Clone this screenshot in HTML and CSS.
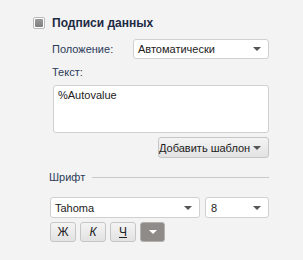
FILE: index.html
```html
<!DOCTYPE html>
<html>
<head>
<meta charset="utf-8">
<link rel="stylesheet" href="styles.css">
</head>
<body>
<div class="panel">
  <div class="header">
    <span class="checkbox"></span>
    <span class="title">Подписи данных</span>
  </div>
  <div class="body">
    <div class="row">
      <span class="label">Положение:</span>
      <div class="select pos"><span>Автоматически</span><i class="arrow"></i></div>
    </div>
    <div class="label text-label">Текст:</div>
    <div class="textarea">%Autovalue</div>
    <div class="btn-row">
      <div class="btn add">Добавить шаблон<i class="arrow"></i></div>
    </div>
  </div>
  <div class="font">
    <div class="legend"><span class="label">Шрифт</span><span class="rule"></span></div>
    <div class="font-row">
      <div class="select face"><span>Tahoma</span><i class="arrow"></i></div>
      <div class="select size"><span>8</span><i class="arrow"></i></div>
    </div>
    <div class="style-row">
      <div class="btn sq">Ж</div>
      <div class="btn sq italic">К</div>
      <div class="btn sq under">Ч</div>
      <div class="btn sq dark"><i class="arrow white"></i></div>
    </div>
  </div>
</div>
</body>
</html>
```
FILE: styles.css
```css
* { box-sizing: border-box; }
html, body { margin: 0; padding: 0; background: #f3f3f3; }
body {
  font-family: "Liberation Sans", Arial, sans-serif;
  font-size: 11px;
  color: #222;
  width: 303px;
  height: 260px;
  overflow: hidden;
}
.panel { padding: 17px 0 0 33px; width: 269px; }
.header { display: flex; align-items: center; height: 12px; gap: 7px; }
.checkbox {
  width: 12px; height: 12px;
  border: 1px solid #b9b9b9;
  border-radius: 2px;
  background: #fff;
  padding: 1px;
  display: flex;
}
.checkbox::before {
  content: ""; flex: 1;
  background: linear-gradient(#9a9a9a, #7e7e7e);
  border-radius: 1px;
}
.title { font-weight: bold; font-size: 12px; color: #1d2a44; }
.body { padding-left: 19px; }
.label { color: #2b3a5a; line-height: 14px; }
.row { display: flex; align-items: center; margin-top: 10px; height: 20px; }
.row .label { width: 81px; }
.select {
  position: relative;
  display: flex; align-items: center;
  background: #fff;
  border: 1px solid #d0d0d0;
  border-radius: 3px;
  padding-left: 4px;
  color: #222;
}
.select.pos { width: 136px; height: 20px; }
.arrow {
  position: absolute; right: 7px; top: 50%;
  margin-top: -2px;
  width: 0; height: 0;
  border-left: 4px solid transparent;
  border-right: 4px solid transparent;
  border-top: 4px solid #555;
}
.arrow.white { border-top-color: #fff; position: static; margin: 0; }
.text-label { margin-top: 6px; }
.textarea {
  margin-top: 6px;
  margin-left: 1px;
  height: 48px;
  background: #fff;
  border: 1px solid #d0d0d0;
  border-radius: 3px;
  padding: 2px 4px;
  line-height: 14px;
  color: #222;
}
.btn-row { display: flex; justify-content: flex-end; margin-top: 4px; }
.btn {
  position: relative;
  display: flex; align-items: center; justify-content: center;
  background: linear-gradient(#f4f4f4, #e2e2e2);
  border: 1px solid #c6c6c6;
  border-radius: 3px;
  color: #222;
}
.btn.add { width: 111px; height: 21px; justify-content: flex-start; padding-left: 0; }
.font { padding-left: 16px; }
.legend { display: flex; align-items: center; gap: 7px; margin-top: 12px; }
.rule { flex: 1; height: 1px; background: #c9c9c9; margin-top: 1px; }
.font-row { display: flex; gap: 5px; margin-top: 13px; padding-left: 1px; }
.select.face { width: 150px; height: 21px; }
.select.size { width: 64px; height: 21px; padding-left: 5px; }
.style-row { display: flex; gap: 4px; margin-top: 4px; padding-left: 1px; }
.btn.sq { width: 26px; height: 20px; font-size: 12px; }
.btn.italic { font-style: italic; }
.btn.under { text-decoration: underline; }
.btn.dark { width: 25px; background: #8e8b88; border-color: #b4b2b0; }
```
